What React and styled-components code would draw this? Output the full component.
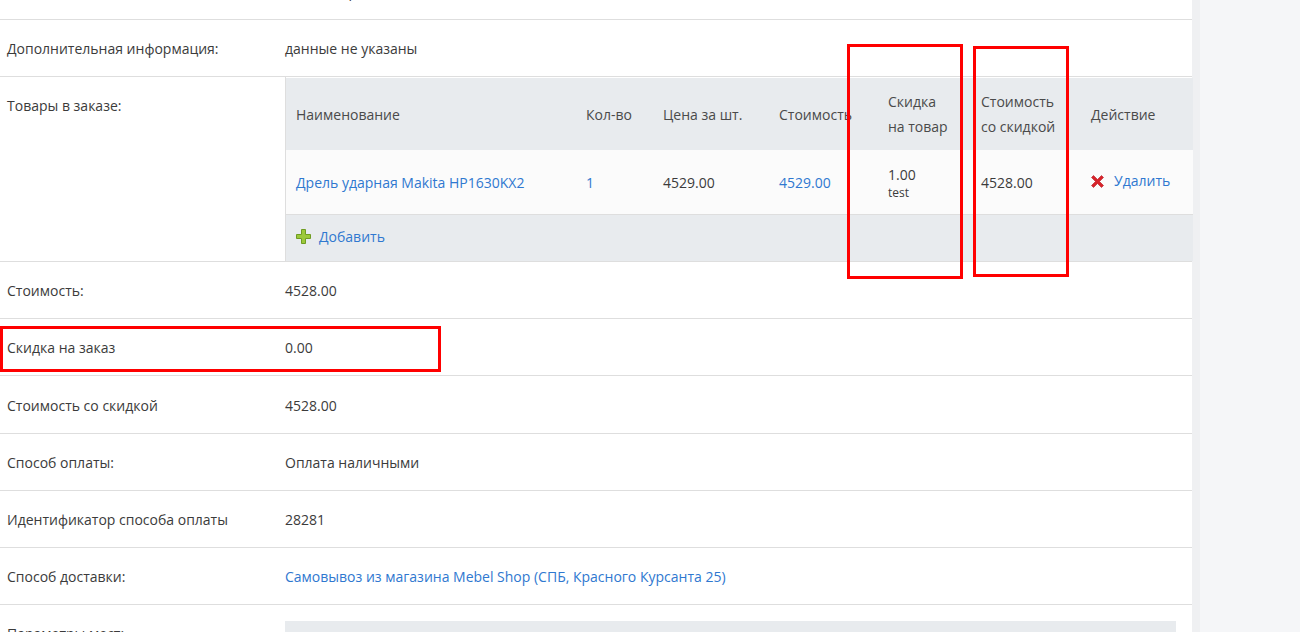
import React from "react";
import styled, { createGlobalStyle } from "styled-components";

const GlobalStyle = createGlobalStyle`
  html, body {
    margin: 0;
    padding: 0;
    background: #f5f6f8;
    font-family: "Open Sans", "Liberation Sans", sans-serif;
    font-size: 14px;
    color: #3b3b3b;
  }
`;

const Page = styled.div`
  display: flex;
  height: 632px;
  overflow: hidden;
`;

const Content = styled.div`
  width: 1192px;
  flex: none;
  background: #fff;
  position: relative;
`;

const SideStrip = styled.div`
  width: 8px;
  flex: none;
  background: #eff0f2;
`;

// the page is scrolled a little: the first row is mostly above the top edge
const List = styled.div`
  margin-top: -37px;
`;

const Row = styled.div`
  display: grid;
  grid-template-columns: 285px 1fr;
  border-bottom: 1px solid #dedede;
  box-sizing: border-box;
  min-height: ${(p) => p.$h || 57}px;
  padding-top: ${(p) => (p.$flush ? 0 : 2)}px;
`;

const Label = styled.div`
  padding: 0 7px;
  display: flex;
  align-items: ${(p) => (p.$top ? "flex-start" : "center")};
  padding-top: ${(p) => (p.$top ? "19px" : "0")};
  line-height: 20px;
`;

const Value = styled.div`
  display: flex;
  align-items: center;
  line-height: 20px;
`;

const Link = styled.a`
  color: #2f78d0;
  text-decoration: none;
  cursor: pointer;
`;

const TableCell = styled.div`
  border-left: 1px solid #dedede;
  padding-top: 1px;
`;

const Table = styled.table`
  width: 100%;
  border-collapse: collapse;
  table-layout: fixed;
`;

const Th = styled.th`
  background: #e8ebee;
  text-align: left;
  font-weight: normal;
  color: #4a4a4a;
  padding: 11px 10px;
  line-height: 25px;
  height: 50px;
  vertical-align: middle;
  white-space: nowrap;
`;

const Td = styled.td`
  background: #fbfbfb;
  padding: 1px 10px 0;
  height: 63px;
  border-bottom: 1px solid #dedede;
  vertical-align: middle;
  line-height: 20px;
  white-space: nowrap;
`;

const FooterTd = styled.td`
  background: #e8ebee;
  height: 46px;
  padding: 0 10px;
  vertical-align: middle;
`;

const Small = styled.div`
  font-size: 12px;
  line-height: 16px;
`;

const Discount = styled.div`
  line-height: 20px;
`;

const Action = styled.span`
  display: inline-flex;
  align-items: center;
  gap: ${(p) => p.$gap}px;
  margin-top: ${(p) => p.$shift}px;
`;

const GrayBox = styled.div`
  background: #e8ebee;
  height: 40px;
  margin: 16px 16px 0 0;
`;

const RedBox = styled.div`
  position: absolute;
  border: 3px solid #ff0000;
  box-sizing: border-box;
  pointer-events: none;
`;

const PlusIcon = () => (
  <svg width="15" height="15" viewBox="0 0 15 15">
    <path
      d="M5.5 0.5h4v5h5v4h-5v5h-4v-5h-5v-4h5z"
      fill="#9cc93a"
      stroke="#6f9c22"
      strokeWidth="1"
    />
  </svg>
);

const CrossIcon = () => (
  <svg width="13" height="13" viewBox="0 0 13 13">
    <path
      d="M2.5 0.5L6.5 4.5L10.5 0.5L12.5 2.5L8.5 6.5L12.5 10.5L10.5 12.5L6.5 8.5L2.5 12.5L0.5 10.5L4.5 6.5L0.5 2.5Z"
      fill="#d8232a"
      stroke="#b51a20"
      strokeWidth="0.6"
    />
  </svg>
);

const cols = [290, 77, 116, 109, 93, 110, 112];

const summary = [
  ["Стоимость:", "4528.00", 57],
  ["Скидка на заказ", "0.00", 57],
  ["Стоимость со скидкой", "4528.00", 58],
  ["Способ оплаты:", "Оплата наличными", 57],
  ["Идентификатор способа оплаты", "28281", 57],
];

export default function App() {
  return (
    <>
      <GlobalStyle />
      <Page>
        <Content>
          <List>
            <Row>
              <Label>Имя:</Label>
              <Value>Иван Петров</Value>
            </Row>
            <Row>
              <Label>Дополнительная информация:</Label>
              <Value>данные не указаны</Value>
            </Row>
            <Row $flush>
              <Label $top>Товары в заказе:</Label>
              <TableCell>
                <Table>
                  <colgroup>
                    {cols.map((w, i) => (
                      <col key={i} style={{ width: w }} />
                    ))}
                  </colgroup>
                  <thead>
                    <tr>
                      <Th>Наименование</Th>
                      <Th>Кол-во</Th>
                      <Th>Цена за шт.</Th>
                      <Th>Стоимость</Th>
                      <Th>
                        Скидка
                        <br />
                        на товар
                      </Th>
                      <Th>
                        Стоимость
                        <br />
                        со скидкой
                      </Th>
                      <Th>Действие</Th>
                    </tr>
                  </thead>
                  <tbody>
                    <tr>
                      <Td>
                        <Link>Дрель ударная Makita HP1630KX2</Link>
                      </Td>
                      <Td>
                        <Link>1</Link>
                      </Td>
                      <Td>4529.00</Td>
                      <Td>
                        <Link>4529.00</Link>
                      </Td>
                      <Td>
                        <Discount>1.00</Discount>
                        <Small>test</Small>
                      </Td>
                      <Td>4528.00</Td>
                      <Td>
                        <Action $gap={10} $shift={-5}>
                          <CrossIcon />
                          <Link>Удалить</Link>
                        </Action>
                      </Td>
                    </tr>
                    <tr>
                      <FooterTd colSpan={7}>
                        <Action $gap={8} $shift={-5}>
                          <PlusIcon />
                          <Link>Добавить</Link>
                        </Action>
                      </FooterTd>
                    </tr>
                  </tbody>
                </Table>
              </TableCell>
            </Row>
            {summary.map(([label, value, h]) => (
              <Row key={label} $h={h}>
                <Label>{label}</Label>
                <Value>{value}</Value>
              </Row>
            ))}
            <Row>
              <Label>Способ доставки:</Label>
              <Value>
                <Link>Самовывоз из магазина Mebel Shop (СПБ, Красного Курсанта 25)</Link>
              </Value>
            </Row>
            <Row $flush>
              <Label $top>Параметры мест:</Label>
              <div>
                <GrayBox />
              </div>
            </Row>
          </List>
          <RedBox style={{ left: 847, top: 44, width: 116, height: 235 }} />
          <RedBox style={{ left: 973, top: 46, width: 96, height: 231 }} />
          <RedBox style={{ left: 0, top: 326, width: 441, height: 46 }} />
        </Content>
        <SideStrip />
      </Page>
    </>
  );
}
